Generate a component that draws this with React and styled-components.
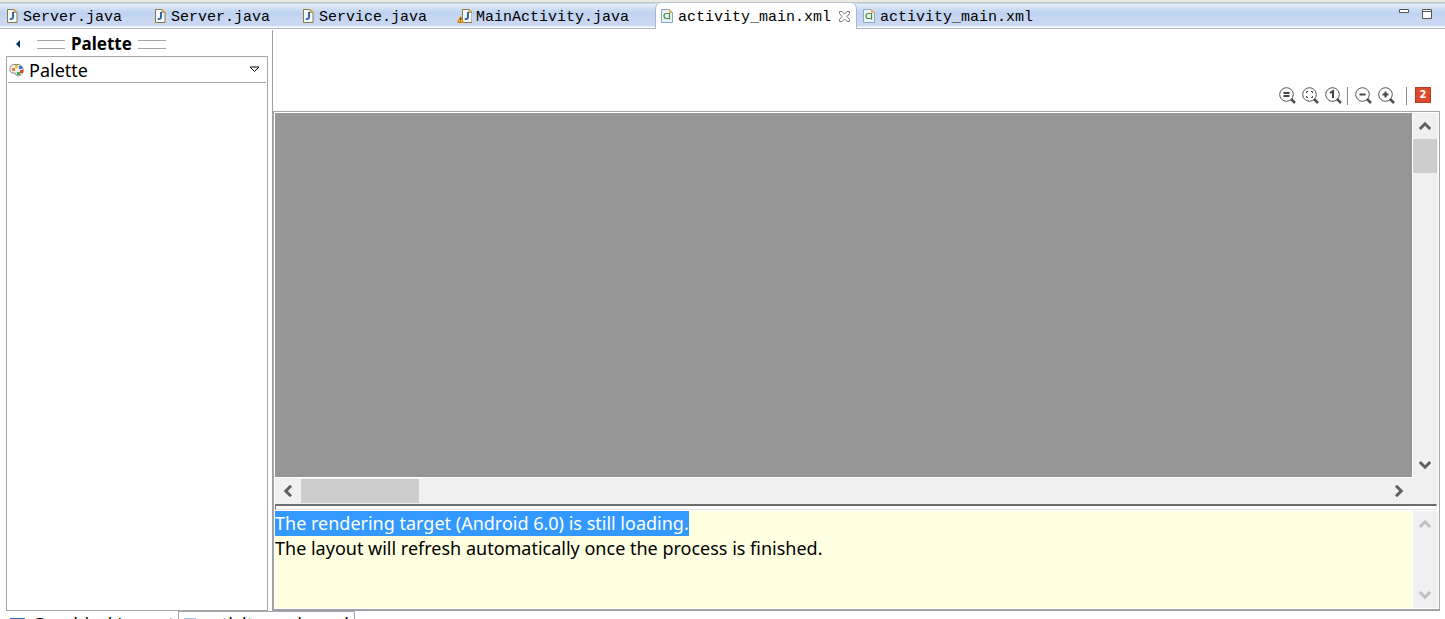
import React from "react";
import styled, { createGlobalStyle, css } from "styled-components";

const Global = createGlobalStyle`
  * { box-sizing: border-box; }
  body { margin: 0; background: #fff; color: #000; font-family: "Noto Sans", "Open Sans", sans-serif; }
  button { font: inherit; color: inherit; border: 0; padding: 0; margin: 0; background: none; }
  svg { display: block; flex: none; }
`;

const Window = styled.div`
  display: flex;
  flex-direction: column;
  height: 100vh;
  min-height: 400px;
  overflow: hidden;
`;

const TabBar = styled.header`
  display: flex;
  flex: none;
  height: 29px;
  padding-top: 1px;
  border-top: 2px solid #ece9e0;
  border-bottom: 1px solid #b0b4d2;
  background: linear-gradient(#b4c6d2 0 1px, #e4edf6 2px, #bdd3f1 11px, #c9d7f3 17px, #c9d7f3 24px, #fff 25px);
`;

const TabGroup = styled.nav`
  display: flex;
  flex: 1;
`;

const Tab = styled.button`
  display: flex;
  align-items: center;
  gap: 4px;
  flex: none;
  width: ${(p) => p.$width}px;
  height: 26px;
  padding-left: 6px;
  font: 15px/20px "Liberation Mono", monospace;
  white-space: nowrap;
  ${(p) =>
    p.$active &&
    css`
      padding-left: 5px;
      background: #fff;
      border: 1px solid #b0b4d2;
      border-width: 0 1px;
      border-radius: 6px 6px 0 0;
      box-shadow: 0 1px #fff;
    `}
`;

const TabLabel = styled.span`
  padding-top: 4px;
`;

const CloseMark = styled.span`
  margin-left: 4px;
`;

const WindowControls = styled.div`
  display: flex;
  gap: 13px;
  padding: 6px 13px 0 0;
  align-items: flex-start;
`;

const Workspace = styled.main`
  display: flex;
  flex: 1;
  min-height: 0;
  padding: 1px 5px 0 6px;
`;

const PalettePanel = styled.aside`
  display: flex;
  flex-direction: column;
  flex: none;
  width: 262px;
`;

const PaletteTitle = styled.div`
  display: flex;
  align-items: center;
  gap: 6px;
  height: 26px;
  padding: 2px 0 0 9px;
`;

const CollapseButton = styled.button`
  width: 16px;
  height: 16px;
  display: flex;
  align-items: center;
`;

const Heading = styled.h2`
  margin: 0;
  font-size: 17px;
  line-height: 24px;
`;

const Grip = styled.span`
  width: 28px;
  height: 9px;
  border: 1px solid #a5a5a5;
  border-width: 1px 0;
`;

const PaletteBody = styled.div`
  flex: 1;
  border: 1px solid #a5a6ac;
  padding: 0 1px;
`;

const Drawer = styled.button`
  display: flex;
  align-items: center;
  gap: 5px;
  width: 100%;
  height: 26px;
  padding: 0 6px 0 1px;
  border-bottom: 1px solid #a5a5a5;
  font-size: 18px;
  line-height: 24px;
  text-align: left;
`;

const Grow = styled.span`
  flex: 1;
`;

const Editor = styled.section`
  display: flex;
  flex-direction: column;
  flex: 1;
  min-width: 0;
  margin-left: 4px;
  border-left: 1px solid #a0a0a0;
`;

const Toolbar = styled.div`
  display: flex;
  align-items: flex-end;
  justify-content: flex-end;
  flex: none;
  height: 81px;
  padding: 0 9px 6px 0;
`;

const Tool = styled.button`
  width: 23px;
  height: 20px;
  padding-left: 2px;
`;

const Divider = styled.span`
  width: 1px;
  height: 18px;
  margin: 0 ${(p) => p.$right}px 0 ${(p) => p.$left}px;
  background: #8c8c8c;
`;

const ErrorBadge = styled.button`
  width: 16px;
  height: 16px;
  margin-bottom: 2px;
  border: 1px solid #bd3c1f;
  background: #dc4a2e;
  color: #fff;
  font: bold 10px/14px "DejaVu Sans", sans-serif;
  text-align: center;
`;

const Frame = styled.div`
  display: flex;
  flex-direction: column;
  flex: 1;
  min-height: 0;
  border: 1px solid #a5a6ac;
  border-bottom: 2px solid #a0a2a8;
  padding: 1px;
`;

const CanvasRow = styled.div`
  display: flex;
  flex: 1;
  min-height: 0;
`;

const Canvas = styled.div`
  flex: 1;
  background: #969696;
  border-right: 1px solid #fff;
  border-bottom: 1px solid #fff;
`;

const VerticalBar = styled.div`
  display: flex;
  flex-direction: column;
  align-items: center;
  flex: none;
  width: 25px;
  padding-right: 1px;
  background: #f0f0f0;
`;

const HorizontalBar = styled.div`
  display: flex;
  align-items: center;
  flex: none;
  height: 26px;
  padding-right: 26px;
  background: #f0f0f0;
`;

const ScrollButton = styled.button`
  display: flex;
  align-items: center;
  justify-content: center;
  width: 26px;
  height: 26px;
  color: ${(p) => (p.disabled ? "#bfbfbf" : "#606060")};
`;

const Thumb = styled.div`
  flex: none;
  width: ${(p) => p.$width}px;
  height: ${(p) => p.$height}px;
  background: #cdcdcd;
`;

const Sash = styled.div`
  flex: none;
  height: 6px;
  margin-right: 1px;
  border: 1px solid #e3e3e3;
  border-top: 2px solid #6e6e6e;
  border-left-color: #6e6e6e;
`;

const MessageRow = styled.div`
  display: flex;
  flex: none;
  height: 98px;
  padding-top: 1px;
`;

const Message = styled.div`
  flex: 1;
  background: #ffffe1;
  border-right: 1px solid #fff;
  font-size: 18px;
  line-height: 25px;
  white-space: nowrap;
  overflow: hidden;
  p { margin: 0; }
  mark { display: inline-block; background: #3399ff; color: #fff; }
`;

const PageTabs = styled.footer`
  display: flex;
  flex: none;
  height: 8px;
  overflow: hidden;
`;

const PageTab = styled.button`
  display: flex;
  align-items: flex-start;
  gap: 6px;
  flex: none;
  width: ${(p) => p.$width}px;
  height: 30px;
  padding-left: ${(p) => (p.$framed ? 5 : 10)}px;
  font-size: 18px;
  line-height: ${(p) => (p.$framed ? 24 : 26)}px;
  white-space: nowrap;
  ${(p) => p.$framed && css`border: 1px solid #a5a6ac;`}
`;

function JavaIcon({ warning }) {
  return (
    <svg width={warning ? 15 : 13} height="16" viewBox={warning ? "-4 0 15 16" : "0 0 13 16"}>
      <path d="M1.500 1.500h6.500l3 3v10h-9.500z" fill="#f4f9ff" stroke="#8a7a42" />
      <path d="M8 1.500v3h3z" fill="#e5b463" stroke="#c09a4a" />
      <path d="M7 4v5q0 2.500-3.200 2" fill="none" stroke="#2d6a9f" strokeWidth="2" />
      {warning && (
        <g>
          <path d="M-.5 8.500l3 6h-6z" fill="#f6b33c" stroke="#c98618" strokeLinejoin="round" />
          <path d="M-.5 10v2M-.5 13v1" stroke="#5d3900" />
        </g>
      )}
    </svg>
  );
}

function XmlIcon() {
  return (
    <svg width="13" height="16" viewBox="0 0 13 16">
      <path d="M.5 1.500h8l3 3v10h-11z" fill="#e6f3fb" stroke="#8ca9b8" />
      <path d="M8.500 1.500v3h3z" fill="#f5b56f" stroke="#e6a868" />
      <path d="M8.500 5.500H5.500Q3 5.500 3 8t2.500 2.500h3M8.500 5v6.500" fill="none" stroke="#4f8f3c" strokeWidth="1.200" />
    </svg>
  );
}

function CloseIcon() {
  return (
    <svg width="11" height="11" viewBox="0 0 11 11">
      <path d="M.5.5h2.500L5.500 3 8 .5h2.500V2.500L8 5.500l2.500 3v2H8L5.500 8 3 10.500H.5v-2l2.500-3-2.500-3z" fill="#fff" stroke="#777" />
    </svg>
  );
}

function PaletteIcon() {
  return (
    <svg width="15" height="14" viewBox="0 0 15 14">
      <path d="M4 1.500h6q4.500 2 4.500 6-1 5-6 5.500-2-.5-2.500-3-4 1-5-2Q0 3.500 4 1.500z" fill="#eee" stroke="#8b8b8b" />
      <rect x="3" y="5" width="3" height="3" fill="#e8852c" />
      <rect x="6" y="2" width="3" height="3" fill="#edc531" />
      <rect x="10" y="3" width="3" height="3" fill="#3477d8" />
      <rect x="11" y="7" width="3" height="3" fill="#e33c27" />
      <rect x="8" y="9" width="3" height="3" fill="#35b44a" />
    </svg>
  );
}

const glyphs = {
  equal: <path d="M4.500 6h6M4.500 9h6" strokeWidth="2" />,
  fit: <path d="M4.500 6V4.500H6M9 4.500h1.500V6M10.500 9v1.500H9M6 10.500H4.500V9" />,
  one: <path d="M5 6l3-2v7" strokeWidth="2" />,
  minus: <path d="M4.500 7.500h6" strokeWidth="2" />,
  plus: <path d="M4.500 7.500h6M7.500 4.500v6" strokeWidth="2" />,
};

function ZoomIcon({ kind }) {
  return (
    <svg width="17" height="17" viewBox="0 0 17 17" fill="none" stroke="#444">
      <circle cx="7.500" cy="7.500" r="6.800" stroke="#555" />
      <path d="M12 12l4 4" stroke="#4f4f4f" strokeWidth="2.500" />
      {glyphs[kind]}
    </svg>
  );
}

const turns = { up: 0, right: 90, down: 180, left: 270 };

function Chevron({ to }) {
  return (
    <svg width="12" height="12" viewBox="0 0 12 12">
      <path d="M.8 9L6 3.800 11.200 9" transform={`rotate(${turns[to]} 6 6)`} fill="none" stroke="currentColor" strokeWidth="3" />
    </svg>
  );
}

const tabs = [
  { name: "Server.java", width: 148 },
  { name: "Server.java", width: 148 },
  { name: "Service.java", width: 155 },
  { name: "MainActivity.java", width: 204, warning: true },
  { name: "activity_main.xml", width: 202, xml: true, active: true },
  { name: "activity_main.xml", width: 190, xml: true },
];

const tools = [["equal", "Emulate real size"], ["fit", "Zoom to fit"], ["one", "Zoom to 100%"]];
const steps = [["minus", "Zoom out"], ["plus", "Zoom in"]];

export default function App() {
  return (
    <>
      <Global />
      <Window>
        <TabBar>
          <TabGroup>
            {tabs.map((t, i) => (
              <Tab key={i} $width={t.width} $active={t.active}>
                {t.xml ? <XmlIcon /> : <JavaIcon warning={t.warning} />}
                <TabLabel>{t.name}</TabLabel>
                {t.active && <CloseMark><CloseIcon /></CloseMark>}
              </Tab>
            ))}
          </TabGroup>
          <WindowControls>
            <button aria-label="Minimize">
              <svg width="10" height="4"><path d="M.5.5h9v3h-9z" fill="#fff" stroke="#555" /></svg>
            </button>
            <button aria-label="Maximize">
              <svg width="10" height="10"><path d="M.5.5h9v9h-9zM.5 2.500h9" fill="#fff" stroke="#555" /></svg>
            </button>
          </WindowControls>
        </TabBar>
        <Workspace>
          <PalettePanel>
            <PaletteTitle>
              <CollapseButton aria-label="Collapse palette">
                <svg width="5" height="8"><path d="M5 0v8L1 4z" fill="#003068" /></svg>
              </CollapseButton>
              <Grip />
              <Heading>Palette</Heading>
              <Grip />
            </PaletteTitle>
            <PaletteBody>
              <Drawer>
                <PaletteIcon />
                Palette
                <Grow />
                <svg width="11" height="7"><path d="M1 1h9L5.500 5.500z" fill="#fff" stroke="#000" /></svg>
              </Drawer>
            </PaletteBody>
          </PalettePanel>
          <Editor>
            <Toolbar>
              {tools.map(([kind, label]) => (
                <Tool key={kind} aria-label={label}><ZoomIcon kind={kind} /></Tool>
              ))}
              <Divider $left={1} $right={5} />
              {steps.map(([kind, label]) => (
                <Tool key={kind} aria-label={label}><ZoomIcon kind={kind} /></Tool>
              ))}
              <Divider $left={7} $right={8} />
              <ErrorBadge>2</ErrorBadge>
            </Toolbar>
            <Frame>
              <CanvasRow>
                <Canvas />
                <VerticalBar>
                  <ScrollButton aria-label="Scroll up"><Chevron to="up" /></ScrollButton>
                  <Thumb $width={24} $height={34} />
                  <Grow />
                  <ScrollButton aria-label="Scroll down"><Chevron to="down" /></ScrollButton>
                </VerticalBar>
              </CanvasRow>
              <HorizontalBar>
                <ScrollButton aria-label="Scroll left"><Chevron to="left" /></ScrollButton>
                <Thumb $width={118} $height={24} />
                <Grow />
                <ScrollButton aria-label="Scroll right"><Chevron to="right" /></ScrollButton>
              </HorizontalBar>
              <Sash />
              <MessageRow>
                <Message>
                  <p><mark>The rendering target (Android 6.0) is still loading.</mark></p>
                  <p>The layout will refresh automatically once the process is finished.</p>
                </Message>
                <VerticalBar>
                  <ScrollButton disabled aria-label="Scroll message up"><Chevron to="up" /></ScrollButton>
                  <Grow />
                  <ScrollButton disabled aria-label="Scroll message down"><Chevron to="down" /></ScrollButton>
                </VerticalBar>
              </MessageRow>
            </Frame>
          </Editor>
        </Workspace>
        <PageTabs>
          <PageTab $width={178}>
            <svg width="16" height="20"><path d="M0 7h15v12H0z" fill="#2a62c8" /></svg>
            Graphical Layout
          </PageTab>
          <PageTab $width={177} $framed>
            <svg width="13" height="20"><path d="M0 6h12v12H0z" fill="#9cc3ee" /></svg>
            activity_main.xml
          </PageTab>
        </PageTabs>
      </Window>
    </>
  );
}
